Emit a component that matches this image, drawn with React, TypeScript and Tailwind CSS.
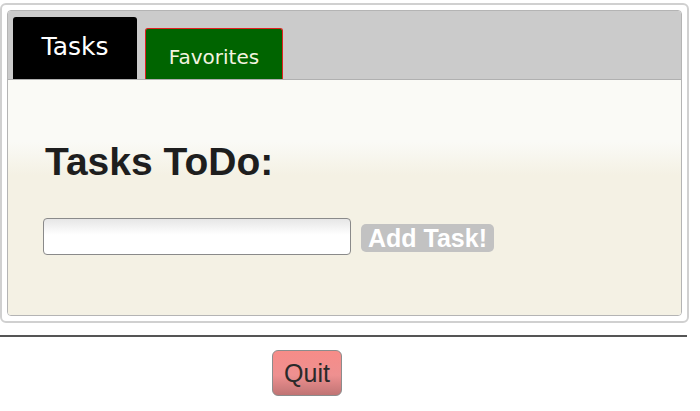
export default function App() {
  return (
    <div className="w-[700px] h-[411px] bg-white overflow-hidden font-['Liberation_Sans',Arial,sans-serif]">
      {/* tabs widget */}
      <div className="mt-[3px] w-[689px] h-[320px] border-2 border-[#d0d0d0] rounded-md p-[5px] bg-white">
        <div className="h-full flex flex-col border border-[#b4b4b4] rounded overflow-hidden">
          <div className="h-[69px] shrink-0 bg-[#cbcbcb] border-b border-[#b0b0b0] flex items-end gap-2 pl-[5px]">
            <div className="w-[124px] h-[62px] bg-black rounded-t-[3px] flex justify-center pt-[17px] text-white text-[25px] leading-none font-['DejaVu_Sans',Verdana,sans-serif]">
              Tasks
            </div>
            <div className="w-[138px] h-[51px] bg-[#006400] border border-b-0 border-[#e02020] rounded-t-[3px] flex justify-center pt-[18px] text-[#f4f4e0] text-[20px] leading-none font-['DejaVu_Sans',Verdana,sans-serif]">
              Favorites
            </div>
          </div>
          <div className="flex-1 bg-[linear-gradient(to_bottom,#fafaf6_0px,#fafaf6_62px,#f4f1e4_95px,#f4f1e4_100%)] pl-[35px] pt-[62px]">
            <h2 className="text-[39px] leading-none font-bold text-[#1e1e1e] ml-[2px]">Tasks ToDo:</h2>
            <div className="mt-[37px] flex items-center gap-[10px]">
              <input
                type="text"
                className="w-[308px] h-[37px] border border-[#8a8a8a] rounded-[4px] bg-[linear-gradient(to_bottom,#e6e6e6,#ffffff_45%,#ffffff)] outline-none px-2"
              />
              <button className="mt-[3px] w-[133px] h-[28px] rounded-[5px] bg-[#c2c2c2] text-white text-[25px] font-bold leading-none flex items-center justify-center">
                Add Task!
              </button>
            </div>
          </div>
        </div>
      </div>
      <div className="mt-[12px] w-[687px] h-[2px] bg-[#555]" />
      <div className="flex pl-[272px] mt-[13px]">
        <button className="w-[70px] h-[46px] rounded-[6px] border border-[#8c8c8c] bg-[linear-gradient(to_bottom,#f78c88,#ee9090_55%,#c07474)] text-[#2a2a2a] text-[25px] leading-none flex items-center justify-center">
          Quit
        </button>
      </div>
    </div>
  );
}
